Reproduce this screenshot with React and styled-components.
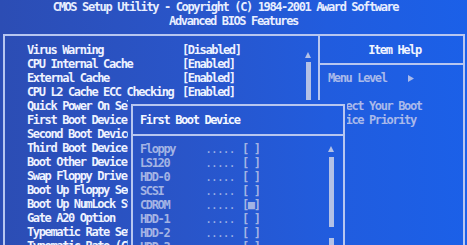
import React from "react";
import styled, { createGlobalStyle } from "styled-components";

const BG = "linear-gradient(to right, #2c4db4 0%, #2955c9 40%, #215cde 70%, #1b60e8 100%)";

const GlobalStyle = createGlobalStyle`
  html, body { margin: 0; padding: 0; background: #2556cc; overflow: hidden; }
  #root { width: 467px; height: 245px; }
`;

const Screen = styled.div`
  position: relative;
  width: 467px;
  height: 245px;
  overflow: hidden;
  background: ${BG};
  background-attachment: fixed;
  font-family: "DejaVu Sans Mono", "Liberation Mono", monospace;
  font-weight: bold;
  font-size: 12px;
  letter-spacing: -1.37px;
  color: #eef2ff;
  display: flex;
  flex-direction: column;
`;

const Header = styled.div`
  display: flex;
  flex-direction: column;
  align-items: center;
  line-height: 14px;
  color: #e8eeff;
`;

const HeaderLine = styled.div`
  white-space: pre;
  padding-right: ${(p) => p.$shift || 0}px;
`;

const Frame = styled.div`
  flex: 1;
  margin: 6px 2px 0 3px;
  border: 2px solid #b7c6f0;
  border-bottom: none;
  display: grid;
  grid-template-columns: 313px 1fr;
`;

const LeftPanel = styled.div`
  display: flex;
  padding: 7px 0 0 22px;
`;

const List = styled.div`
  display: flex;
  flex-direction: column;
`;

const Row = styled.div`
  display: grid;
  grid-template-columns: 155px auto;
  height: 14px;
  line-height: 14px;
  white-space: pre;
`;

const Scroll = styled.div`
  margin-left: auto;
  margin-right: ${(p) => p.$right}px;
  padding-top: ${(p) => p.$top}px;
  display: flex;
  flex-direction: column;
  align-items: center;
  width: 6px;
`;

const Track = styled.div`
  width: ${(p) => p.$w || 5}px;
  height: ${(p) => p.$h}px;
  margin-top: ${(p) => p.$gap}px;
  background: #b4c1e6;
`;

const RightPanel = styled.div`
  border-left: 2px solid #b7c6f0;
  display: flex;
  flex-direction: column;
`;

const HelpHeader = styled.div`
  height: 27px;
  line-height: 28px;
  text-align: center;
  border-bottom: 2px solid #b7c6f0;
  color: #f2f5ff;
  padding-left: 6px;
`;

const HelpBody = styled.div`
  padding: 6px 0 0 8px;
  display: flex;
  flex-direction: column;
  color: #a9b9ea;
`;

const HelpLine = styled.div`
  height: 14px;
  line-height: 14px;
  white-space: pre;
  display: flex;
  align-items: center;
`;

const Popup = styled.div`
  position: absolute;
  left: 128px;
  top: 100px;
  width: 214px;
  height: 160px;
  padding: 4px 2px 0 3px;
  background: ${BG};
  background-attachment: fixed;
`;

const PopupInner = styled.div`
  height: 100%;
  border: 2px solid #b7c6f0;
  border-bottom: none;
  display: flex;
  flex-direction: column;
`;

const PopupTitle = styled.div`
  height: 28px;
  line-height: 28px;
  padding-left: 7px;
  border-bottom: 2px solid #b7c6f0;
  color: #f4f7ff;
`;

const PopupBody = styled.div`
  display: flex;
  padding: 6px 0 0 7px;
`;

const Item = styled.div`
  display: grid;
  grid-template-columns: 65px 37px auto;
  height: 14px;
  line-height: 14px;
  white-space: pre;
  color: #a3b3e4;
`;

const Dots = styled.span`
  color: #9aaee4;
  font-weight: normal;
`;

const Arrow = ({ size = 6 }) => (
  <svg width={size} height={size} viewBox="0 0 6 6" style={{ display: "block" }}>
    <polygon points="3,0 6,6 0,6" fill="#b4c1e6" />
  </svg>
);

const RightTri = () => (
  <svg width="6" height="7" viewBox="0 0 6 7" style={{ display: "block", marginLeft: 4 }}>
    <polygon points="0,0 6,3.5 0,7" fill="#a9b9ea" />
  </svg>
);

const rows = [
  ["Virus Warning", "[Disabled]"],
  ["CPU Internal Cache", "[Enabled]"],
  ["External Cache", "[Enabled]"],
  ["CPU L2 Cache ECC Checking", "[Enabled]"],
  ["Quick Power On Self Test", "[Enabled]"],
  ["First Boot Device", "[Floppy]"],
  ["Second Boot Device", "[HDD-0]"],
  ["Third Boot Device", "[LS120]"],
  ["Boot Other Device", "[Enabled]"],
  ["Swap Floppy Drive", "[Disabled]"],
  ["Boot Up Floppy Seek", "[Enabled]"],
  ["Boot Up NumLock Status", "[On]"],
  ["Gate A20 Option", "[Fast]"],
  ["Typematic Rate Setting", "[Disabled]"],
  ["Typematic Rate (Chars/Sec)", "6"],
];

const devices = [
  ["Floppy", false],
  ["LS120", false],
  ["HDD-0", false],
  ["SCSI", false],
  ["CDROM", true],
  ["HDD-1", false],
  ["HDD-2", false],
  ["HDD-3", false],
];

export default function App() {
  return (
    <>
      <GlobalStyle />
      <Screen>
        <Header>
          <HeaderLine $shift={16}>CMOS Setup Utility - Copyright (C) 1984-2001 Award Software</HeaderLine>
          <HeaderLine>Advanced BIOS Features</HeaderLine>
        </Header>
        <Frame>
          <LeftPanel>
            <List>
              {rows.map(([l, v]) => (
                <Row key={l}>
                  <span>{l}</span>
                  <span>{v}</span>
                </Row>
              ))}
            </List>
            <Scroll $right={7} $top={9}>
              <Arrow />
              <Track $h={41} $gap={4} />
            </Scroll>
          </LeftPanel>
          <RightPanel>
            <HelpHeader>Item Help</HelpHeader>
            <HelpBody>
              <HelpLine>
                {"Menu Level   "}
                <RightTri />
              </HelpLine>
              <HelpLine> </HelpLine>
              <HelpLine>Select Your Boot</HelpLine>
              <HelpLine>Device Priority</HelpLine>
            </HelpBody>
          </RightPanel>
        </Frame>
        <Popup>
          <PopupInner>
            <PopupTitle>First Boot Device</PopupTitle>
            <PopupBody>
              <List>
                {devices.map(([d, sel]) => (
                  <Item key={d}>
                    <span>{d}</span>
                    <Dots>.....</Dots>
                    <span>{sel ? "[■]" : "[ ]"}</span>
                  </Item>
                ))}
              </List>
              <Scroll $right={9} $top={4}>
                <Arrow />
                <Track $h={70} $gap={5} />
                <Track $h={8} $gap={11} />
              </Scroll>
            </PopupBody>
          </PopupInner>
        </Popup>
      </Screen>
    </>
  );
}
